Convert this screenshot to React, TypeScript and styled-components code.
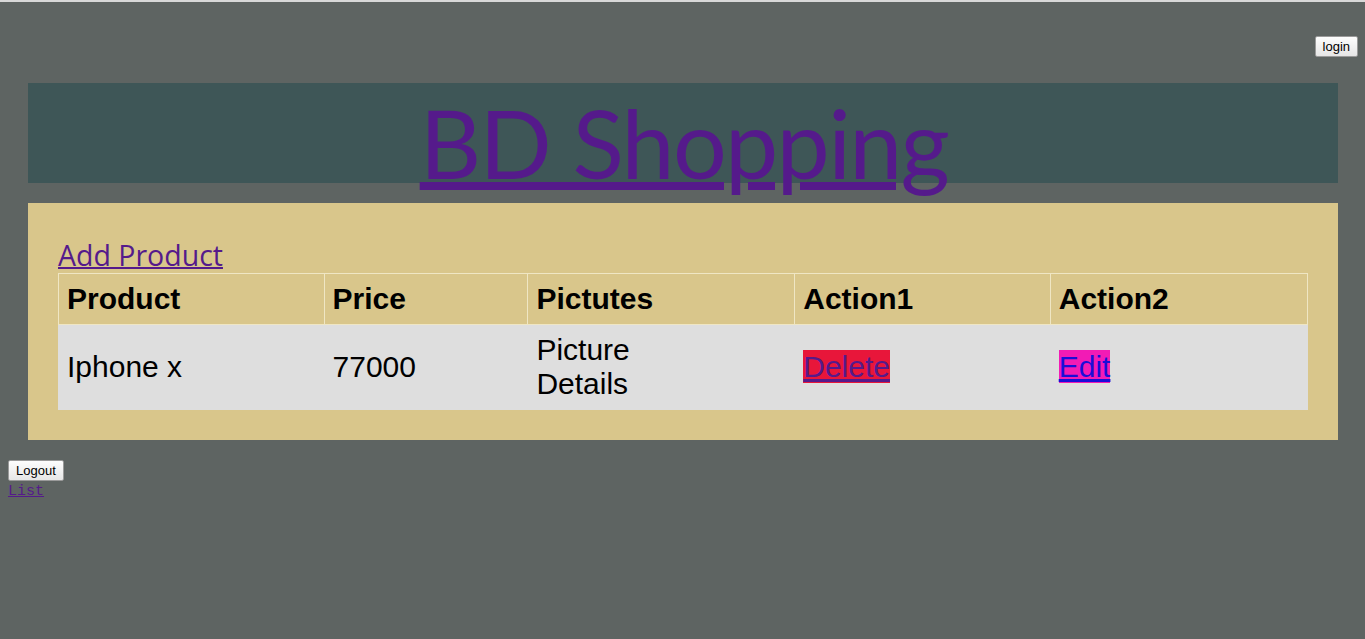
import React from "react";
import styled, { createGlobalStyle } from "styled-components";

const Global = createGlobalStyle`
  html, body { margin: 0; padding: 0; }
  body {
    background: #5e6462;
    border-top: 2px solid #d8d8d8;
    min-height: 637px;
    font-family: "Liberation Serif", serif;
    padding: 8px;
    box-sizing: border-box;
  }
`;

const TopBar = styled.div`
  display: flex;
  justify-content: flex-end;
  padding: 26px 0 0;
  margin-right: -1px;
`;

const SmallButton = styled.button`
  font-family: "Liberation Sans", Arial, sans-serif;
  font-size: 13px;
  height: 21px;
  padding: 0 7px;
  background: linear-gradient(#fdfdfd, #e6e6e6);
  border: 1px solid #9a9a9a;
  border-radius: 2px;
  color: #000;
`;

const Header = styled.header`
  margin: 26px 19px 0 20px;
  height: 100px;
  background: #3e5657;
  display: flex;
  justify-content: center;
`;

const Title = styled.a`
  font-family: "Lato", sans-serif;
  font-weight: 400;
  font-size: 95px;
  line-height: 120px;
  height: 120px;
  color: #551a8b;
  text-decoration: underline;
  text-decoration-thickness: 8px;
  text-underline-offset: 3px;
  margin-top: -1px;
  letter-spacing: -1.7px;
  margin-left: 2px;
`;

const Panel = styled.main`
  margin: 20px 19px 0 20px;
  background: #d9c68b;
  padding: 35px 30px 30px;
`;

const AddLink = styled.a`
  display: block;
  font-family: "Open Sans", sans-serif;
  font-size: 28.5px;
  line-height: 35px;
  color: #551a8b;
  text-decoration: underline;
  text-decoration-thickness: 2px;
  width: fit-content;
`;

const Table = styled.table`
  width: 100%;
  border-collapse: collapse;
  font-family: "Liberation Sans", Arial, sans-serif;
  font-size: 30px;
  border: 1px solid #efe6c4;
`;

const Th = styled.th<{ $w: number }>`
  width: ${(p) => p.$w}px;
  text-align: left;
  font-weight: bold;
  padding: 8px;
  line-height: 34px;
  border: 1px solid #efe6c4;
  color: #000;
`;

const Row = styled.tr`
  background: #dedede;
`;

const Td = styled.td`
  padding: 8px;
  height: 68px;
  line-height: 34px;
  color: #000;
  border: 1px solid #dedede;
`;

const ActionLink = styled.a<{ $bg: string; $fg: string }>`
  background: ${(p) => p.$bg};
  color: ${(p) => p.$fg};
  text-decoration: underline;
  text-decoration-thickness: 3px;
`;

const Footer = styled.div`
  margin-top: 20px;
  display: flex;
  flex-direction: column;
  align-items: flex-start;
`;

const ListLink = styled.a`
  font-family: "Liberation Mono", "Courier New", monospace;
  font-size: 15px;
  line-height: 16px;
  margin-top: 3px;
  color: #551a8b;
  text-decoration: underline;
`;

export default function App() {
  return (
    <>
      <Global />
      <TopBar>
        <SmallButton>login</SmallButton>
      </TopBar>
      <Header>
        <Title href="#">BD Shopping</Title>
      </Header>
      <Panel>
        <AddLink href="#">Add Product</AddLink>
        <Table>
          <thead>
            <tr>
              <Th $w={267}>Product</Th>
              <Th $w={201}>Price</Th>
              <Th $w={268}>Pictutes</Th>
              <Th $w={256}>Action1</Th>
              <Th $w={258}>Action2</Th>
            </tr>
          </thead>
          <tbody>
            <Row>
              <Td>Iphone x</Td>
              <Td>77000</Td>
              <Td>
                Picture
                <br />
                Details
              </Td>
              <Td>
                <ActionLink href="#" $bg="#e8163a" $fg="#551a8b">
                  Delete
                </ActionLink>
              </Td>
              <Td>
                <ActionLink href="#" $bg="#f21bb5" $fg="#1a0dd8">
                  Edit
                </ActionLink>
              </Td>
            </Row>
          </tbody>
        </Table>
      </Panel>
      <Footer>
        <SmallButton>Logout</SmallButton>
        <ListLink href="#">List</ListLink>
      </Footer>
    </>
  );
}
